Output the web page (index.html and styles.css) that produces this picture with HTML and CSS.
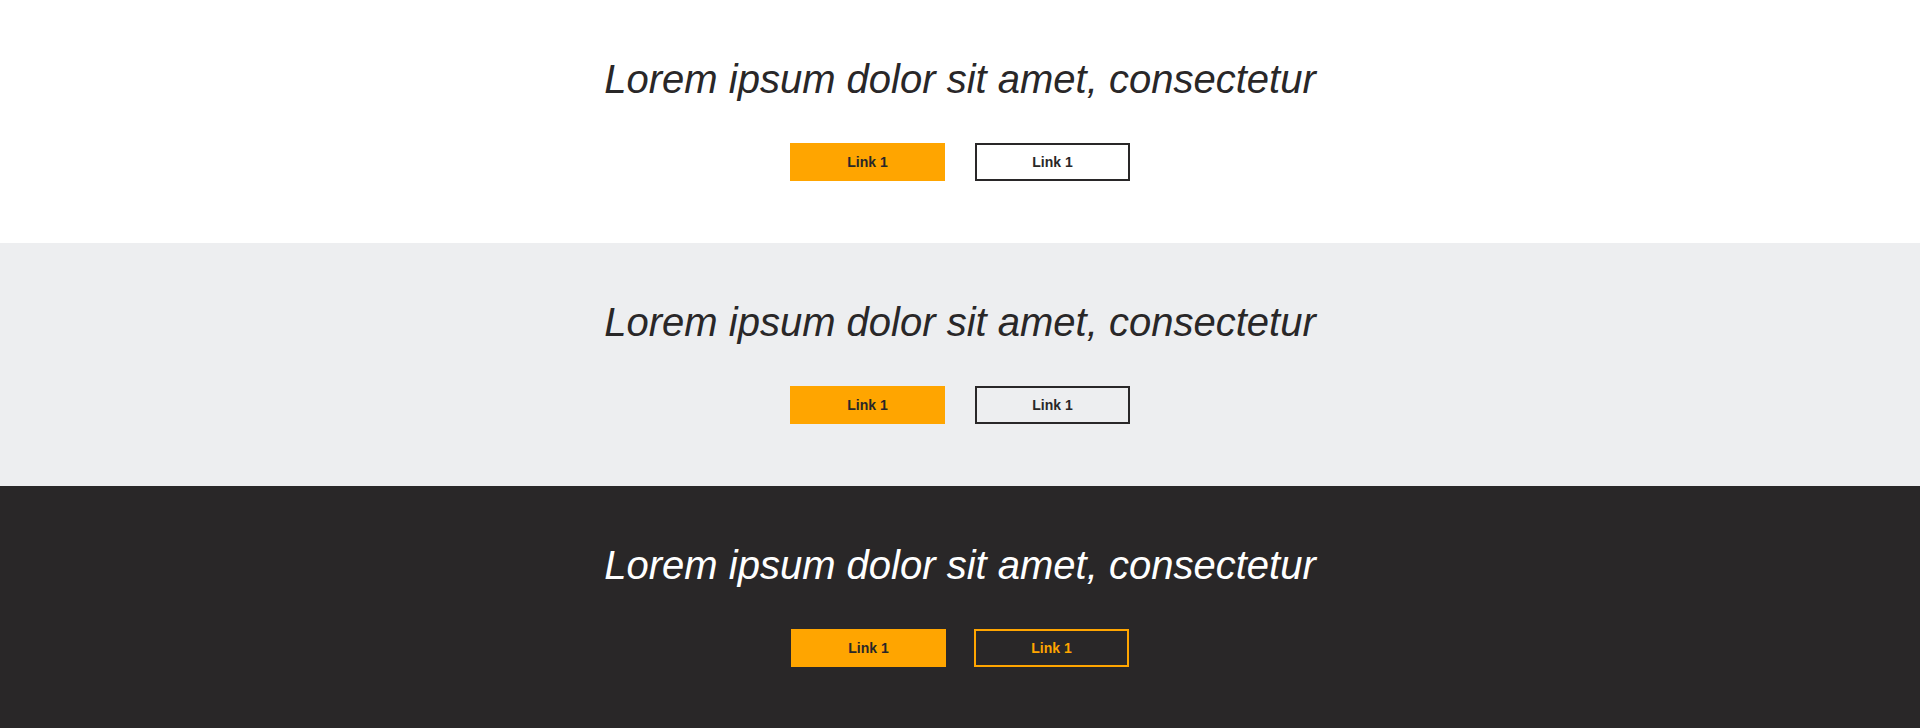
FILE: index.html
```html
<!DOCTYPE html>
<html lang="en">
<head>
  <meta charset="UTF-8">
  <title>Sections</title>
  <link rel="stylesheet" href="styles.css">
</head>
<body>

<section class="band band-light">
  <h2 class="band-title">Lorem ipsum dolor sit amet, consectetur</h2>
  <div class="band-links">
    <a class="btn btn-solid" href="#">Link 1</a>
    <a class="btn btn-outline" href="#">Link 1</a>
  </div>
</section>

<section class="band band-grey">
  <h2 class="band-title">Lorem ipsum dolor sit amet, consectetur</h2>
  <div class="band-links">
    <a class="btn btn-solid" href="#">Link 1</a>
    <a class="btn btn-outline" href="#">Link 1</a>
  </div>
</section>

<section class="band band-dark">
  <h2 class="band-title">Lorem ipsum dolor sit amet, consectetur</h2>
  <div class="band-links">
    <a class="btn btn-solid" href="#">Link 1</a>
    <a class="btn btn-outline" href="#">Link 1</a>
  </div>
</section>

</body>
</html>
```

FILE: styles.css
```css
* {
  margin: 0;
  padding: 0;
  box-sizing: border-box;
}

body {
  font-family: "Liberation Sans", Arial, sans-serif;
  color: #292728;
}

.band {
  height: 243px;
  padding-top: 55px;
  display: flex;
  flex-direction: column;
  align-items: center;
}

.band-light {
  background: #ffffff;
}

.band-grey {
  background: #edeef0;
}

.band-dark {
  height: 242px;
  background: #292728;
}

.band-title {
  font-size: 40px;
  font-style: italic;
  font-weight: normal;
  line-height: 48px;
}

.band-dark .band-title {
  color: #ffffff;
}

.band-links {
  display: flex;
  gap: 30px;
  margin-top: 40px;
}

.band-dark .band-links {
  gap: 28px;
}

.btn {
  display: block;
  width: 155px;
  height: 38px;
  line-height: 34px;
  border: 2px solid transparent;
  font-size: 14px;
  font-weight: bold;
  text-align: center;
  text-decoration: none;
  color: #292728;
}

.btn-solid {
  background: #ffa500;
  border-color: #ffa500;
}

.btn-outline {
  border-color: #292728;
}

.band-dark .btn-outline {
  border-color: #ffa500;
  color: #ffa500;
}
```
